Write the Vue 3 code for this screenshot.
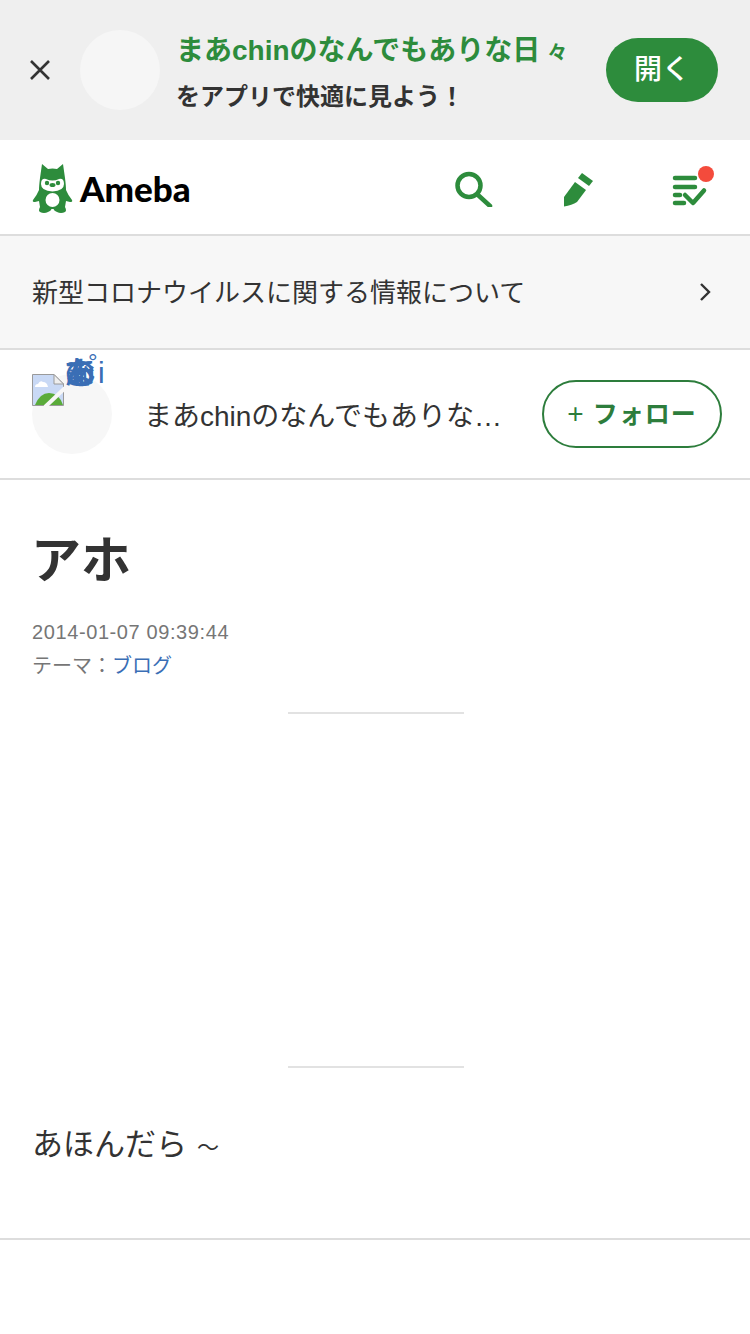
<script setup>
const altChars = ['ま', 'あ', 'の', 'な', 'ん', 'で', 'も']
</script>

<template>
  <div class="page">
    <section class="banner">
      <svg class="close" width="20" height="20" viewBox="0 0 20 20"><path d="M1 1 19 19M19 1 1 19" stroke="#333" stroke-width="2.600" fill="none"/></svg>
      <div class="banner-avatar"></div>
      <div class="banner-text">
        <div class="banner-title">まあchinのなんでもありな日<span class="small-kana">々</span></div>
        <div class="banner-sub">をアプリで快適に見よう！</div>
      </div>
      <div class="open">開く</div>
    </section>

    <header class="head">
      <div class="logo">
        <svg width="42" height="52" viewBox="0 0 42 52">
          <path fill="#2d8c3c" d="M10 2 16 7Q20.500 6 25 7L31 2 33 16Q34 24 34 28 36 33 40 38 41 40 38 40L34 39 33 45Q35 49 33 50 29 52 25 50 22 49 21.500 47H19.500Q19 49 16 50 12 52 8 50 6 49 8 45L7 39 3 40Q0 40 1 38 5 33 7 28 7 24 8 16Z"/>
          <circle cx="20.500" cy="38" r="7" fill="#fff"/>
          <path fill="#fff" d="M9 22Q9 16 14 17 20.500 20 27 17 32 16 32 22 32 29 20.500 29.500 9 29 9 22Z"/>
          <circle cx="15" cy="21" r="2.200" fill="#2d8c3c"/><circle cx="26" cy="21" r="2.200" fill="#2d8c3c"/>
          <ellipse cx="20.500" cy="23" rx="3" ry="2" fill="#2d8c3c"/>
        </svg>
        <span class="logo-word">Ameba</span>
      </div>
      <div class="tools">
        <svg width="40" height="40" viewBox="0 0 40 40"><circle cx="16" cy="18.500" r="11.500" fill="none" stroke="#2d8c3c" stroke-width="4.500"/><path d="M25 28 37 39" stroke="#2d8c3c" stroke-width="4.500" stroke-linecap="round"/></svg>
        <svg width="40" height="40" viewBox="0 0 40 40"><path fill="#2d8c3c" d="M17 15 28 23 19 35Q14 38 6 39.500V30Z"/><path fill="#2d8c3c" d="M24 6 35 14 31 19 20 11Z"/></svg>
        <div class="tool-news">
          <svg width="40" height="40" viewBox="0 0 40 40"><path d="M5 11H25M5 20H25M5 28H10M5 36H14" stroke="#2d8c3c" stroke-width="4.500" stroke-linecap="round"/><path d="M15 28 23 36 34 23.500" fill="none" stroke="#2d8c3c" stroke-width="4.500" stroke-linecap="round" stroke-linejoin="round"/></svg>
          <span class="dot"></span>
        </div>
      </div>
    </header>

    <div class="notice">
      <span class="notice-text">新型コロナウイルスに関する情報について</span>
      <svg width="14" height="20" viewBox="0 0 14 20"><path d="M3 2 11 10 3 18" fill="none" stroke="#333" stroke-width="2.400"/></svg>
    </div>

    <div class="blog-row">
      <div class="blog-avatar">
        <svg class="broken" width="32" height="32" viewBox="0 0 32 32">
          <path d="M.5.5H22L31.500 10V31.500H.5Z" fill="#c9d9f5" stroke="#9a9a9a"/>
          <path d="M22 .5V10H31.500Z" fill="#eee" stroke="#9a9a9a"/>
          <path d="M3 31Q8 19 17 19 27 19 31 31Z" fill="#5aab3a"/>
          <path d="M3 13Q3 10 6 10 8 6 11 8 15 8 16 13Z" fill="#fff"/>
          <path d="M13 33 33 14" stroke="#f7f7f7" stroke-width="4"/>
        </svg>
        <div class="alt">
          <span v-for="(ch, i) in altChars" :key="i" class="alt-ch">{{ ch }}</span>
          <span class="alt-ring">°</span>
          <span class="alt-i">i</span>
        </div>
      </div>
      <div class="blog-name">まあchinのなんでもありな日々</div>
      <div class="follow"><span class="plus">+</span> フォロー</div>
    </div>

    <article class="article">
      <h1 class="title">アホ</h1>
      <div class="date">2014-01-07 09:39:44</div>
      <div class="theme">テーマ：<span class="theme-link">ブログ</span></div>
      <div class="rule rule-top"></div>
      <div class="gap"></div>
      <div class="rule"></div>
      <p class="body-text">あほんだら<span class="wave">～</span></p>
    </article>
  </div>
</template>

<style>
html, body { margin: 0; background: #fff; }
</style>

<style scoped>
.page { width: 750px; height: 1334px; overflow: hidden; background: #fff; color: #333; font-family: "Liberation Sans", "Noto Sans CJK JP", sans-serif; }
.banner { height: 140px; background: #efefef; display: flex; align-items: center; box-sizing: border-box; padding: 0 32px 0 30px; }
.close { flex: none; }
.banner-avatar { flex: none; width: 80px; height: 80px; border-radius: 50%; background: #f6f6f6; margin-left: 30px; }
.banner-text { flex: 1; margin-left: 16px; min-width: 0; padding-top: 6px; }
.banner-title { color: #2d8c3c; font-size: 28px; line-height: 38px; font-weight: 700; white-space: nowrap; }
.small-kana { font-size: 20px; margin-left: 7px; }
.banner-sub { font-size: 24px; line-height: 36px; font-weight: 700; margin-top: 7px; white-space: nowrap; }
.open { flex: none; width: 112px; height: 64px; border-radius: 32px; background: #2d8c3c; color: #fff; font-size: 28px; font-weight: 500; line-height: 64px; text-align: center; }
.head { height: 94px; border-bottom: 2px solid #ddd; display: flex; align-items: center; justify-content: space-between; padding: 0 40px 0 32px; }
.logo { display: flex; align-items: center; gap: 6px; padding-top: 2px; }
.logo-word { color: #000; font-family: Lato, sans-serif; font-weight: 900; font-size: 35px; }
.tools { display: flex; align-items: center; gap: 65px; }
.tool-news { position: relative; width: 40px; height: 40px; margin-left: 7px; }
.dot { position: absolute; top: -1px; left: 28px; width: 16px; height: 16px; border-radius: 50%; background: #f44b3c; }
.notice { height: 112px; background: #f7f7f7; border-bottom: 2px solid #ddd; display: flex; align-items: center; justify-content: space-between; padding: 0 38px 0 32px; font-size: 26px; }
.notice-text { padding-bottom: 4px; }
.blog-row { height: 128px; border-bottom: 2px solid #ddd; display: flex; align-items: center; padding: 0 28px 0 32px; }
.blog-avatar { flex: none; position: relative; width: 80px; height: 80px; border-radius: 50%; background: #f7f7f7; }
.broken { position: absolute; left: 0; top: 0; }
.alt { position: absolute; left: 32px; top: -19px; display: grid; color: #3a6eb5; font-size: 32px; line-height: 36px; }
.alt-ch { grid-area: 1 / 1; }
.alt-ring { position: absolute; left: 24px; top: -8px; font-size: 24px; line-height: 30px; }
.alt-i { position: absolute; left: 34px; top: 0; font-size: 30px; line-height: 36px; }
.blog-name { flex: 1; min-width: 0; margin-left: 32px; font-size: 28px; white-space: nowrap; overflow: hidden; text-overflow: ellipsis; margin-right: 38px; }
.follow { flex: none; box-sizing: border-box; width: 180px; height: 68px; border: 2px solid #2d7d3c; border-radius: 34px; color: #2d7d3c; font-size: 25px; line-height: 64px; text-align: center; font-weight: 700; letter-spacing: 1px; }
.plus { font-weight: 400; font-size: 28px; }
.article { padding: 0 32px; border-bottom: 2px solid #ddd; height: 760px; box-sizing: border-box; }
.title { margin: 0; padding-top: 48px; font-size: 50px; line-height: 66px; font-weight: 700; text-indent: -1px; }
.date { margin-top: 21px; font-size: 20px; line-height: 35px; color: #767676; letter-spacing: .6px; }
.theme { font-size: 20px; line-height: 32px; color: #767676; }
.theme-link { color: #3a6eb5; }
.rule { width: 176px; height: 2px; background: #e2e2e2; margin-left: 256px; }
.rule-top { margin-top: 30px; }
.gap { height: 352px; }
.body-text { margin: 51px 0 0; font-size: 31px; line-height: 52px; }
.wave { font-size: 22px; margin-left: 10px; }
</style>
